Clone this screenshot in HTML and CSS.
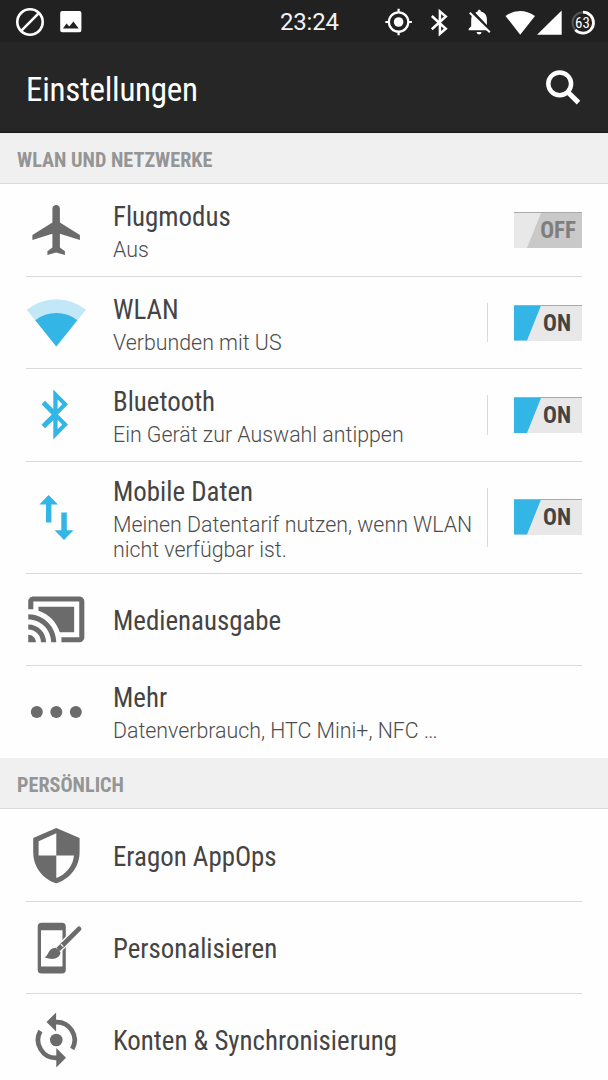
FILE: index.html
```html
<!DOCTYPE html>
<html lang="de">
<head>
<meta charset="utf-8">
<title>Einstellungen</title>
<link rel="stylesheet" href="styles.css">
</head>
<body>
<div class="screen">
  <header class="statusbar">
    <div class="status-left">
      <svg width="30" height="30" viewBox="15.3 6 30 30"><circle cx="30.3" cy="21" r="12.7" fill="none" stroke="#fff" stroke-width="2.6"/><path d="M21.5 29.8 39.1 12.2" stroke="#fff" stroke-width="2.6"/></svg>
      <svg width="22" height="22" viewBox="60 10.3 22 22"><path fill="#fff" fill-rule="evenodd" d="M62.2 10.3h17.2q2 0 2 2v17.2q0 2-2 2H62.2q-2 0-2-2V12.300q0-2 2-2zM63 27.700h15.700l-5.300-7-4.100 5.200-2.800-3.200z"/></svg>
    </div>
    <div class="clock">23:24</div>
    <div class="status-right">
      <svg width="30" height="30" viewBox="384 6 30 30"><g fill="none" stroke="#fff" stroke-width="2.2"><circle cx="398.600" cy="21" r="9.700"/><path d="M398.600 7.700v4M398.600 30.300v4M385.300 21h4M407.900 21h4"/></g><circle cx="398.600" cy="21" r="4.800" fill="#fff"/></svg>
      <svg class="s-bt" width="20" height="30" viewBox="429 6 20 30"><path d="M431.800 15l14 12.700-5.900 5.100V10.400l5.900 5.100-14 12.700" fill="none" stroke="#fff" stroke-width="2.500"/></svg>
      <svg class="s-bell" width="28" height="30" viewBox="466 6 28 30"><path fill="#fff" d="M475.300 11.800q1.400-.800 2.400-1.200c0-2.400 3.100-2.400 3.100 0 4.500 1.200 6.100 4.200 6.100 8.200v5.200zM472.300 13.800l15.500 15.500H468.700v-1.500l2.500-2.500v-6.500q0-3 1.100-5zM476.500 31h5.100q-.500 2.600-2.500 2.600t-2.600-2.600z"/><path d="M469.800 11.700l20 19.600" stroke="#fff" stroke-width="2"/></svg>
      <svg class="s-wifi" width="30" height="30" viewBox="504.500 6 30 30"><path fill="#fff" d="M505 14.900q14.500-9.900 29.500 0L519.700 33.700z"/></svg>
      <svg class="s-cell" width="25" height="30" viewBox="537 6 25 30"><path fill="#fff" d="M537 33.700h24.700V9.500z"/></svg>
      <svg class="s-batt" width="26" height="30" viewBox="570 6 26 30"><circle cx="583" cy="21.700" r="10.500" fill="none" stroke="#555" stroke-width="2"/><circle cx="583" cy="21.700" r="10.500" fill="none" stroke="#fff" stroke-width="2.800" pathLength="100" stroke-dasharray="63 37" transform="rotate(-90 583 21.700)"/><text x="582.500" y="26.600" text-anchor="middle" class="batt-text">63</text></svg>
    </div>
  </header>
  <div class="actionbar">
    <h1>Einstellungen</h1>
    <svg width="40" height="40" viewBox="543 67 40 40"><circle cx="559.700" cy="83.800" r="11.400" fill="none" stroke="#fff" stroke-width="4.500"/><path d="M567.500 91.700l11 10.900" stroke="#fff" stroke-width="5"/></svg>
  </div>

  <h2>WLAN UND NETZWERKE</h2>
  <section>
    <div class="row h93">
      <svg class="icon" viewBox="26 200 60 60"><path transform="translate(27.400 200) scale(2.5)" fill="#6b6b6b" d="M21 16v-2l-8-5V3.500c0-.830-.670-1.500-1.500-1.500S10 2.670 10 3.500V9l-8 5v2l8-2.500V19l-2 1.500V22l3.500-1 3.500 1v-1.500L13 19v-5.500l8 2.500z"/></svg>
      <div class="text"><div class="title">Flugmodus</div><div class="sub">Aus</div></div>
      <div class="switch off"><span>OFF</span></div>
    </div>
    <div class="row h92">
      <svg class="icon" viewBox="26 292.500 60 60"><path fill="#c2e7f6" d="M56.300 346 26.700 309.300A47 47 0 0 1 86 309.300z"/><path fill="#33b5e5" d="M56.300 346 35.300 319.700A33.800 33.800 0 0 1 77.300 319.700z"/></svg>
      <div class="text wlan"><div class="title">WLAN</div><div class="sub">Verbunden mit US</div></div>
      <div class="divider"></div>
      <div class="switch"><span>ON</span></div>
    </div>
    <div class="row h93">
      <svg class="icon" viewBox="26 385 60 60"><path fill="#33b5e5" fill-rule="evenodd" d="M53.300 389.500 68 404.300 58 414.500 68 424.500 53.300 439.500V420.200L45 428.200 41.500 424.700 51.700 414.500 41.500 404.300 45 400.800 53.300 409zM57.600 399.500V409.100L62.300 404.300zM57.600 419.800V429.300L62.300 424.500z"/></svg>
      <div class="text"><div class="title">Bluetooth</div><div class="sub">Ein Gerät zur Auswahl antippen</div></div>
      <div class="divider"></div>
      <div class="switch"><span>ON</span></div>
    </div>
    <div class="row h112">
      <svg class="icon" viewBox="26 487.500 60 60"><path fill="#33b5e5" d="M48.600 494.500 58 504H51.400V522H46V504H39.400zM61.300 512H66.800V529.700H73.500L64 539.500 54.600 529.700H61.300z"/></svg>
      <div class="text"><div class="title">Mobile Daten</div><div class="sub">Meinen Datentarif nutzen, wenn WLAN nicht verfügbar ist.</div></div>
      <div class="divider"></div>
      <div class="switch"><span>ON</span></div>
    </div>
    <div class="row h92">
      <svg class="icon" viewBox="26 589.500 60 60"><path transform="translate(25.700 588.300) scale(2.550)" fill="#6b6b6b" d="M1 18v3h3c0-1.660-1.340-3-3-3zm0-4v2c2.760 0 5 2.240 5 5h2c0-3.870-3.130-7-7-7zm18-7H5v1.630c3.960 1.280 7.090 4.410 8.370 8.370H19V7zM1 10v2c4.970 0 9 4.030 9 9h2c0-6.080-4.930-11-11-11zm20-7H3c-1.100 0-2 .9-2 2v3h2V5h18v14h-7v2h7c1.100 0 2-.9 2-2V5c0-1.100-.9-2-2-2z"/></svg>
      <div class="text single"><div class="title">Medienausgabe</div></div>
    </div>
    <div class="row h92 last">
      <svg class="icon" viewBox="26 682 60 60"><g fill="#6b6b6b"><circle cx="36.800" cy="712" r="6"/><circle cx="56.300" cy="712" r="6"/><circle cx="75.800" cy="712" r="6"/></g></svg>
      <div class="text"><div class="title">Mehr</div><div class="sub">Datenverbrauch, HTC Mini+, NFC <span class="dots">...</span></div></div>
    </div>
  </section>

  <h2>PERSÖNLICH</h2>
  <section>
    <div class="row h93">
      <svg class="icon" viewBox="26 825 60 60"><path fill="#6b6b6b" fill-rule="evenodd" d="M56.300 828 79.600 838V852C79.600 867 69.500 879.500 56.300 883.200 43 879.500 33.200 867 33.200 852V838zM56.300 833.300 38.600 841.300V855.500H56.300zM56.300 855.500V877.900C66 874.500 73 866 74 855.500z"/></svg>
      <div class="text single appops"><div class="title">Eragon AppOps</div></div>
    </div>
    <div class="row h92">
      <svg class="icon" viewBox="26 917.500 60 60"><path fill="#6b6b6b" fill-rule="evenodd" d="M41.500 922.300H62Q65.800 922.300 65.800 926.100V969.200Q65.800 973 62 973H41.500Q37.700 973 37.700 969.200V926.100Q37.700 922.300 41.500 922.300zM41 929.700V966H62.500V929.700z"/><path d="M79 928.200 61.500 945.700 55 952" stroke="#fefefe" stroke-width="7.500" fill="none"/><path d="M79 928.400 62.500 944.700" stroke="#6b6b6b" stroke-width="4.800" stroke-linecap="round"/><path d="M64 943.200 58 949" stroke="#6b6b6b" stroke-width="4.600"/><path d="M60.800 943.600 63.300 946.100" stroke="#fefefe" stroke-width="1.200"/><path fill="#6b6b6b" d="M55.500 947.300Q59 948.800 60.500 952.300C59.300 958.500 52.500 960 44.500 956.800 49 955.500 47.500 948 55.500 947.300z"/></svg>
      <div class="text single"><div class="title">Personalisieren</div></div>
    </div>
    <div class="row h93">
      <svg class="icon" viewBox="26 1010 60 60"><circle cx="56.300" cy="1040" r="6.300" fill="#6b6b6b"/><path d="M55.500 1022.100A18 18 0 0 1 72.200 1049M57 1057.900A18 18 0 0 1 40.400 1031" fill="none" stroke="#6b6b6b" stroke-width="4.700"/><path fill="#6b6b6b" d="M56.100 1012.500V1031.500L46.500 1022zM56.300 1048V1067.500L66 1057.800z"/></svg>
      <div class="text single"><div class="title">Konten &amp; Synchronisierung</div></div>
    </div>
  </section>
</div>
</body>
</html>
```
FILE: styles.css
```css
* { box-sizing: border-box; }
body { margin: 0; background: #fff; font-family: Roboto, "Liberation Sans", sans-serif; }
.screen { width: 608px; height: 1080px; overflow: hidden; background: #fefefe; }
svg { display: block; flex: none; }

.statusbar { height: 42px; background: #212121; display: grid; grid-template-columns: 280px auto 1fr; align-items: center; color: #fff; }
.status-left { display: flex; align-items: center; gap: 15px; padding-left: 15px; }
.clock { font-size: 24px; line-height: 42px; padding-top: 1px; letter-spacing: -0.2px; white-space: nowrap; color: #f2f2f2; }
.status-right { display: flex; align-items: center; justify-content: flex-end; padding-right: 12px; }
.s-bt { margin-left: 15px; }
.s-bell { margin-left: 17px; }
.s-wifi { margin-left: 11px; }
.s-cell { margin-left: 2.5px; }
.s-batt { margin-left: 8px; }
.batt-text { font-family: "Roboto Condensed", Roboto, sans-serif; font-stretch: 75%; font-size: 15px; fill: #fff; }

.actionbar { height: 91px; background: #262626; border-bottom: 1px solid #181818; display: flex; align-items: center; justify-content: space-between; padding: 0 25px 0 26px; }
h1 { margin: 0; padding-top: 5px; color: #fff; font-family: "Roboto Condensed", Roboto, sans-serif; font-stretch: 75%; font-size: 33px; font-weight: 400; letter-spacing: -0.25px; }

h2 { margin: 0; height: 51px; line-height: 54px; padding-left: 17px; background: #f0f0f0; border-bottom: 1px solid #dadada; color: #959595; font-family: "Roboto Condensed", Roboto, sans-serif; font-stretch: 75%; font-size: 20.2px; font-weight: 700; }

.row { margin: 0 26px; border-bottom: 1px solid #dadada; display: flex; align-items: center; }
.last { border-bottom: 0; }
.h92 { height: 92px; }
.h93 { height: 93px; }
.h112 { height: 112px; }
.icon { width: 60px; height: 60px; overflow: visible; }
.text { margin-left: 27px; padding-bottom: 2px; flex: 1; white-space: nowrap; }
.wlan { padding-bottom: 0; }
.single { padding: 2px 0 0; }
.appops { padding-top: 4px; }
.last .text { padding-bottom: 4px; }
.title { font-family: "Roboto Condensed", Roboto, sans-serif; font-stretch: 75%; font-size: 26.9px; line-height: 40px; color: #444; }
.sub { font-size: 21.35px; line-height: 25px; font-weight: 300; color: #4c4c4c; }
.dots { letter-spacing: -0.8px; }
.h112 .sub { white-space: normal; }
.divider { width: 1px; align-self: stretch; margin: 26px 26px 26px 14px; background: #dadada; }
.h112 .text { margin-right: -8px; }
.h112 .divider { margin-left: 22px; }

.switch { position: relative; width: 68px; height: 36px; border-top: 1px solid #aaa; background: #e8e8e8; display: flex; align-items: center; justify-content: flex-end; padding-right: 11px; color: #444; font-family: "Roboto Condensed", Roboto, sans-serif; font-stretch: 75%; font-size: 23px; font-weight: 700; }
.switch::before { content: ""; position: absolute; left: 0; top: 0; width: 27px; height: 35px; background: #33b5e5; clip-path: polygon(0 0, 100% 0, 13px 100%, 0 100%); }
.h112 .switch { margin-bottom: 2px; }
.off { background: #c9c9c9; color: #7e7e7e; padding-right: 6px; }
.off::before { background: #e8e8e8; }
```
